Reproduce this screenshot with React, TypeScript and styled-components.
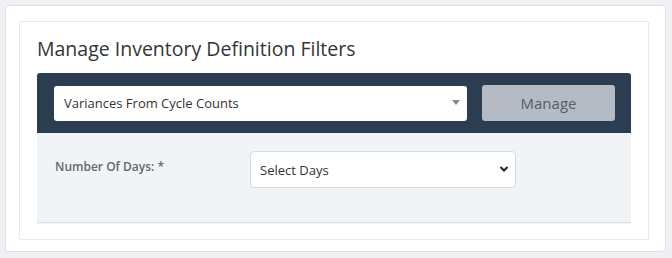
import styled, { createGlobalStyle } from 'styled-components';

const GlobalStyle = createGlobalStyle`
  html, body {
    margin: 0;
    padding: 0;
    background: #eef0f4;
    font-family: "Open Sans", "Liberation Sans", sans-serif;
  }
  * { box-sizing: border-box; }
`;

const Page = styled.div`
  width: 672px;
  height: 258px;
  padding: 5px 6px 6px 5px;
`;

const OuterCard = styled.div`
  background: #fff;
  border: 1px solid #dcdfe4;
  border-radius: 3px;
  height: 247px;
  padding: 15px 16px 0 13px;
`;

const InnerCard = styled.div`
  background: #fff;
  border: 1px solid #e6e8ec;
  border-radius: 2px;
  height: 219px;
  padding: 15px 17px 0 17px;
`;

const Title = styled.h1`
  margin: 0 0 12px 0;
  font-size: 19.5px;
  font-weight: 400;
  line-height: 24px;
  color: #353535;
`;

const Toolbar = styled.div`
  display: flex;
  align-items: center;
  gap: 15px;
  height: 60px;
  padding: 0 16px 0 17px;
  background: #2b3d51;
  border-radius: 3px 3px 0 0;
`;

const SelectBox = styled.div`
  flex: 1;
  position: relative;
  height: 35px;
  display: flex;
  align-items: center;
  padding-left: 10px;
  background: #fff;
  border-radius: 3px;
  font-size: 13px;
  color: #333;
`;

const Caret = styled.span`
  position: absolute;
  right: 7px;
  top: 14px;
  width: 0;
  height: 0;
  border-left: 4px solid transparent;
  border-right: 4px solid transparent;
  border-top: 5px solid #888;
`;

const ManageButton = styled.button`
  width: 133px;
  height: 36px;
  border: none;
  border-radius: 3px;
  background: #b5bbc4;
  color: #555d6a;
  font-family: inherit;
  font-size: 15px;
`;

const FilterPanel = styled.div`
  display: flex;
  align-items: flex-start;
  height: 90px;
  padding: 18px 0 0 18px;
  background: #f1f4f7;
  border-bottom: 1px solid #dde1e6;
  box-shadow: 0 1px 1px rgba(0, 0, 0, 0.04);
`;

const Label = styled.div`
  width: 195px;
  padding-top: 7px;
  font-size: 12px;
  font-weight: 600;
  color: #65686c;
`;

const DaysSelect = styled.div`
  position: relative;
  width: 266px;
  height: 37px;
  display: flex;
  align-items: center;
  padding-left: 9px;
  background: #fff;
  border: 1px solid #d6d9de;
  border-radius: 4px;
  font-size: 13px;
  color: #333;
`;

const Chevron = styled.svg`
  position: absolute;
  right: 6px;
  top: 13px;
`;

export default function App() {
  return (
    <>
      <GlobalStyle />
      <Page>
        <OuterCard>
          <InnerCard>
            <Title>Manage Inventory Definition Filters</Title>
            <Toolbar>
              <SelectBox>
                Variances From Cycle Counts
                <Caret />
              </SelectBox>
              <ManageButton>Manage</ManageButton>
            </Toolbar>
            <FilterPanel>
              <Label>Number Of Days: *</Label>
              <DaysSelect>
                Select Days
                <Chevron width="10" height="8" viewBox="0 0 10 8">
                  <path d="M1.5 2 L5 5.5 L8.5 2" fill="none" stroke="#222" strokeWidth="2" />
                </Chevron>
              </DaysSelect>
            </FilterPanel>
          </InnerCard>
        </OuterCard>
      </Page>
    </>
  );
}
